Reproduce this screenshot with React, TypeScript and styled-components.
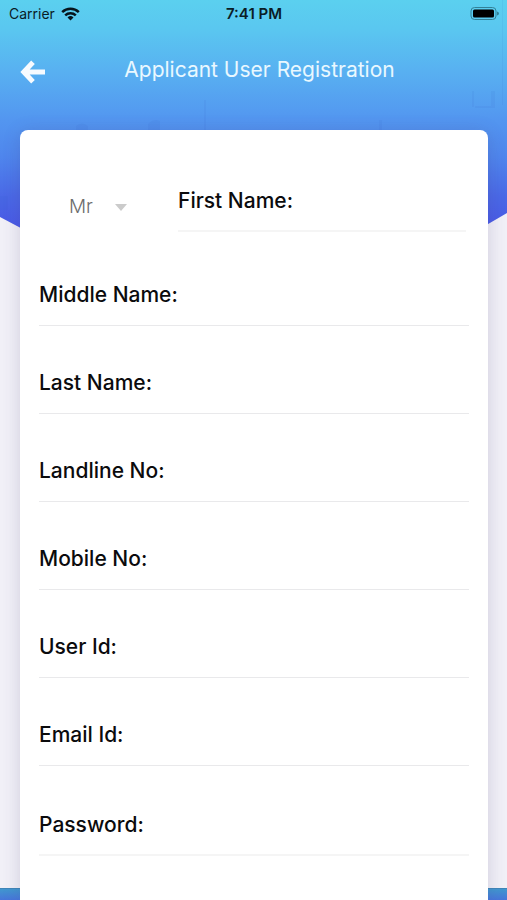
import React, { useState } from 'react';
import styled, { createGlobalStyle } from 'styled-components';

const GlobalStyle = createGlobalStyle`
  *, *::before, *::after { box-sizing: border-box; }
  html, body { margin: 0; }
  body {
    background: #f1f0f7;
    color: #0b0b0d;
    font-family: Inter, "Open Sans", sans-serif;
  }
  button, input, select { font: inherit; color: inherit; }
`;

const Page = styled.div`
  position: relative;
  display: flex;
  flex-direction: column;
  min-height: 100vh;
  isolation: isolate;
`;

const Backdrop = styled.div`
  position: absolute;
  inset: 0;
  z-index: -1;
  display: flex;
  flex-direction: column;
  justify-content: space-between;
  overflow: hidden;
`;

const Hero = styled.svg`
  display: block;
  width: 100%;
  height: 356px;
`;

const BottomBand = styled.div`
  height: 12px;
  border-top: 1px solid #3f86b8;
  background: linear-gradient(#4197cf, #4775da);
`;

const StatusBar = styled.div`
  display: grid;
  grid-template-columns: 1fr auto 1fr;
  align-items: center;
  height: 28px;
  padding: 0 8px 0 9px;
  font-size: 14px;
  line-height: 20px;
  color: #0a1c26;
`;

const Carrier = styled.div`
  display: flex;
  align-items: center;
  gap: 6px;
`;

const Clock = styled.time`
  font-size: 15px;
  font-weight: 600;
`;

const Battery = styled.svg`
  justify-self: end;
`;

const Header = styled.header`
  display: grid;
  grid-template-columns: 32px 1fr 20px;
  align-items: center;
  height: 102px;
  padding: 0 20px 18px;
`;

const BackButton = styled.button`
  display: flex;
  padding: 4px 0 0;
  border: 0;
  background: none;
  cursor: pointer;
`;

const Title = styled.h1`
  margin: 0;
  font-size: 21px;
  font-weight: 400;
  line-height: 24px;
  text-align: center;
  color: #e9f8ff;
`;

const Card = styled.form`
  flex: 1;
  margin: 0 19px 0 20px;
  padding: 12px 19px 40px;
  border-radius: 8px 8px 0 0;
  background: #fff;
  box-shadow: 0 2px 18px rgba(70, 60, 120, 0.2);
`;

const NameRow = styled.div`
  display: grid;
  grid-template-columns: 110px minmax(0, 1fr);
  align-items: end;
  padding: 0 3px 6px 29px;
`;

const TitlePicker = styled.div`
  display: grid;
  grid-template-columns: 58px;
  align-items: center;
  padding: 0 0 13px 1px;
`;

const TitleSelect = styled.select`
  grid-area: 1 / 1;
  height: 24px;
  padding: 0;
  border: 0;
  outline: 0;
  appearance: none;
  background: none;
  font-size: 19px;
  font-weight: 300;
  line-height: 24px;
  color: #6c6c6c;
`;

const Caret = styled.svg`
  grid-area: 1 / 1;
  justify-self: end;
  pointer-events: none;
`;

const Field = styled.div<{ $soft?: boolean }>`
  display: flex;
  align-items: flex-end;
  gap: 8px;
  height: ${({ $soft }) => ($soft ? '90px' : '88px')};
  padding-bottom: ${({ $soft }) => ($soft ? '17px' : '18px')};
  border-bottom: ${({ $soft }) => ($soft ? '2px solid #f5f5f5' : '1px solid #e9e9eb')};
`;

const Label = styled.label`
  font-size: 21px;
  font-weight: 500;
  line-height: 24px;
  white-space: nowrap;
`;

const Input = styled.input`
  flex: 1;
  min-width: 0;
  height: 24px;
  padding: 0;
  border: 0;
  outline: 0;
  background: transparent;
  font-size: 21px;
`;

const fields = [
  { id: 'middleName', label: 'Middle Name:', type: 'text' },
  { id: 'lastName', label: 'Last Name:', type: 'text' },
  { id: 'landline', label: 'Landline No:', type: 'tel' },
  { id: 'mobile', label: 'Mobile No:', type: 'tel' },
  { id: 'userId', label: 'User Id:', type: 'text' },
  { id: 'email', label: 'Email Id:', type: 'email' },
  { id: 'password', label: 'Password:', type: 'password' },
];

function TextField({ id, label, type, soft }: { id: string; label: string; type: string; soft?: boolean }) {
  return (
    <Field $soft={soft}>
      <Label htmlFor={id}>{label}</Label>
      <Input id={id} name={id} type={type} autoComplete="off" />
    </Field>
  );
}

export default function App() {
  const [title, setTitle] = useState('Mr');

  return (
    <>
      <GlobalStyle />
      <Page>
        <Backdrop aria-hidden="true">
          <Hero viewBox="0 0 507 356" preserveAspectRatio="none">
            <defs>
              <linearGradient id="sky" gradientUnits="userSpaceOnUse" x1="0" y1="0" x2="0" y2="240">
                <stop offset="0" stopColor="#5bd0ef" />
                <stop offset="0.12" stopColor="#5ac7f0" />
                <stop offset="0.3" stopColor="#58b0f1" />
                <stop offset="0.5" stopColor="#5396f0" />
                <stop offset="0.65" stopColor="#4f86ed" />
                <stop offset="0.82" stopColor="#4a68e6" />
                <stop offset="1" stopColor="#4953e5" />
              </linearGradient>
            </defs>
            <path d="M0 0H507V213L262 356L0 217Z" fill="url(#sky)" />
            <g fill="#315fc4" opacity="0.08">
              <path d="M204 100h2v30h-2zM76 126q6-5 12 0v5H76zM148 124q6-6 12-3v10h-12zM379 120h3v11h-3z" />
              <path d="M472 91h2v16h-2zM491 91h4v17h-20v-2h16zM502 0h1v105h-1zM0 196h8v14H0z" />
            </g>
          </Hero>
          <BottomBand />
        </Backdrop>

        <StatusBar>
          <Carrier>
            Carrier
            <svg width="19" height="14" viewBox="0 0 19 14" aria-label="Wi-Fi" role="img">
              <g fill="none" stroke="#06141c" strokeWidth="2.5">
                <path d="M1.2 5.1A12 12 0 0 1 17.8 5.1" />
                <path d="M4.2 8.3A7.7 7.7 0 0 1 14.8 8.3" />
              </g>
              <path d="M6.5 10.5A4.4 4.4 0 0 1 12.5 10.5L9.5 13.6Z" fill="#06141c" />
            </svg>
          </Carrier>
          <Clock dateTime="19:41">7:41 PM</Clock>
          <Battery width="30" height="14" viewBox="0 0 30 14" aria-label="Battery full" role="img">
            <rect x="2" y="0.5" width="25" height="12" rx="3.5" fill="none" stroke="#328197" />
            <rect x="4" y="2.5" width="21" height="8" rx="1.5" fill="#000" />
            <path d="M28 4.5Q30 5.2 30 6.5T28 8.5Z" fill="#328197" />
          </Battery>
        </StatusBar>

        <Header>
          <BackButton type="button" aria-label="Back">
            <svg
              width="26"
              height="24"
              viewBox="0 0 26 24"
              fill="none"
              stroke="#f7fbff"
              strokeWidth="5"
            >
              <path d="M13 2.2L3.8 12L13 21.8M4 12H25" />
            </svg>
          </BackButton>
          <Title>Applicant User Registration</Title>
        </Header>

        <Card>
          <NameRow>
            <TitlePicker>
              <TitleSelect
                name="title"
                aria-label="Title"
                value={title}
                onChange={(e) => setTitle(e.target.value)}
              >
                <option>Mr</option>
                <option>Mrs</option>
                <option>Ms</option>
              </TitleSelect>
              <Caret width="12" height="7" viewBox="0 0 12 7" aria-hidden="true">
                <path d="M0 0H12L6 7Z" fill="#cbcbcb" />
              </Caret>
            </TitlePicker>
            <TextField id="firstName" label="First Name:" type="text" soft />
          </NameRow>
          {fields.map((field) => (
            <TextField key={field.id} {...field} soft={field.id === 'password'} />
          ))}
        </Card>
      </Page>
    </>
  );
}
